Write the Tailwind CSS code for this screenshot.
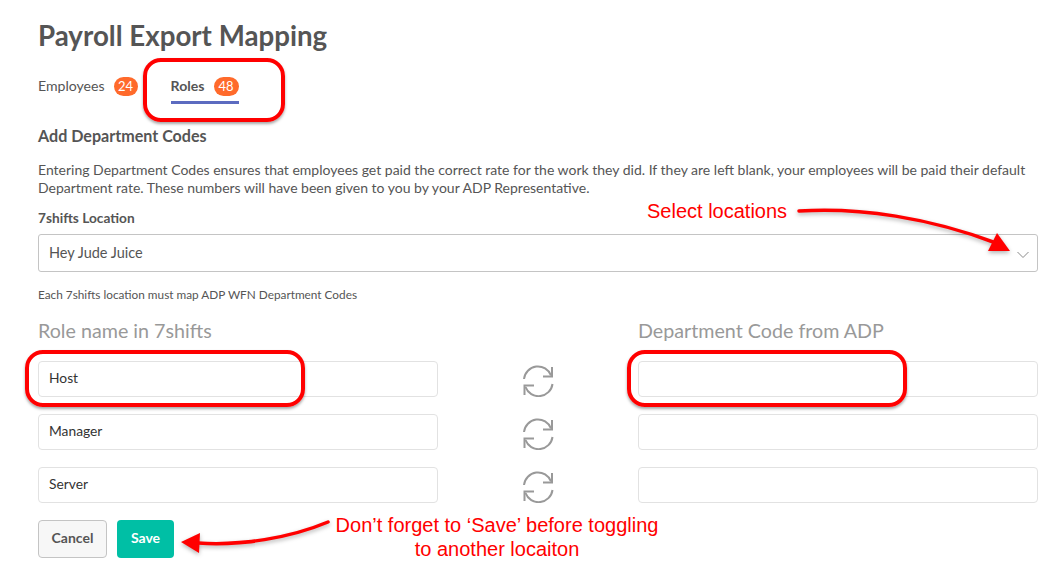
<!DOCTYPE html>
<html lang="en">
  <head>
    <meta charset="UTF-8" />
    <meta name="viewport" content="width=device-width, initial-scale=1.0" />
    <title>Payroll Export Mapping</title>
    <script src="https://cdn.jsdelivr.net/npm/@tailwindcss/browser@4"></script>
  </head>
  <body class="bg-white overflow-hidden font-['Lato',sans-serif]">
    <div class="relative w-[1056px] h-[568px] overflow-hidden">
      <div class="pl-[38px] pr-[18px] pt-[19px]">
        <h1 class="text-[27.7px] leading-[34px] font-bold text-[#555555]">Payroll Export Mapping</h1>

        <!-- tabs -->
        <div class="flex mt-[21px] h-[34px] text-[14.100px] text-[#555555]">
          <div class="flex items-start gap-[9px]">
            <span class="leading-[24px]">Employees</span>
            <span class="w-[24px] h-[19px] mt-[3px] text-center rounded-full bg-[#ff6a2b] text-white text-[13px] leading-[19px]">24</span>
          </div>
          <div class="ml-[33px] flex items-start gap-[9px] h-[30px] w-[68px] border-b-[3px] border-[#5c6bc0]">
            <span class="leading-[24px] font-bold">Roles</span>
            <span class="w-[25px] h-[19px] mt-[3px] text-center rounded-full bg-[#ff6a2b] text-white text-[13px] leading-[19px]">48</span>
          </div>
        </div>

        <h2 class="mt-[17px] text-[16.100px] leading-[22px] font-bold text-[#555555]">Add Department Codes</h2>
        <p class="mt-[14px] text-[14px] leading-[18px] text-[#555555]">
          Entering Department Codes ensures that employees get paid the correct rate for the work they did. If they are left blank, your employees will be paid their default<br />
          Department rate. These numbers will have been given to you by your ADP Representative.
        </p>

        <label class="block mt-[12px] text-[13.700px] leading-[18px] font-bold text-[#555555]">7shifts Location</label>
        <div class="mt-[7px] h-[38px] px-[10px] flex items-center justify-between border border-[#c4c4c4] rounded-[3px] text-[14.500px] text-[#555555]">
          <span class="pb-[1px]">Hey Jude Juice</span>
          <svg class="mr-[-3px] mt-[3px]" width="14" height="8" viewBox="0 0 14 8" fill="none" stroke="#8a8a8a" stroke-width="1"><path d="M1.5 1 7 6.5 12.5 1" /></svg>
        </div>
        <p class="mt-[16px] text-[11.800px] leading-[14px] text-[#555555]">Each 7shifts location must map ADP WFN Department Codes</p>

        <!-- mapping rows -->
        <div class="mt-[17px] grid grid-cols-[400px_200px_400px]">
          <div class="text-[19.700px] leading-[24px] text-[#999999]">Role name in 7shifts</div>
          <div></div>
          <div class="text-[19.700px] leading-[24px] text-[#999999]">Department Code from ADP</div>
        </div>
        <div class="mt-[18px] grid grid-cols-[400px_200px_400px] gap-y-[17px] text-[13.800px] text-[#333333]">
          <div class="h-[36px] px-[10px] pb-[2px] flex items-center border border-[#e2e2e2] rounded-[4px]">Host</div>
          <div class="flex justify-center items-end">
            <svg width="32" height="32" viewBox="0 0 32 32" fill="none" stroke="#999999" stroke-width="2"><path d="M2 14A14 14 0 0 1 29 10.500" /><path d="M30 2V11.500H21" /><path d="M30.500 19A14 14 0 0 1 3.500 22" /><path d="M2.500 30V20.500H12" /></svg>
          </div>
          <div class="h-[36px] border border-[#e2e2e2] rounded-[4px]"></div>

          <div class="h-[36px] px-[10px] pb-[2px] flex items-center border border-[#e2e2e2] rounded-[4px]">Manager</div>
          <div class="flex justify-center items-end">
            <svg width="32" height="32" viewBox="0 0 32 32" fill="none" stroke="#999999" stroke-width="2"><path d="M2 14A14 14 0 0 1 29 10.500" /><path d="M30 2V11.500H21" /><path d="M30.500 19A14 14 0 0 1 3.500 22" /><path d="M2.500 30V20.500H12" /></svg>
          </div>
          <div class="h-[36px] border border-[#e2e2e2] rounded-[4px]"></div>

          <div class="h-[36px] px-[10px] pb-[2px] flex items-center border border-[#e2e2e2] rounded-[4px]">Server</div>
          <div class="flex justify-center items-end">
            <svg width="32" height="32" viewBox="0 0 32 32" fill="none" stroke="#999999" stroke-width="2"><path d="M2 14A14 14 0 0 1 29 10.500" /><path d="M30 2V11.500H21" /><path d="M30.500 19A14 14 0 0 1 3.500 22" /><path d="M2.500 30V20.500H12" /></svg>
          </div>
          <div class="h-[36px] border border-[#e2e2e2] rounded-[4px]"></div>
        </div>

        <div class="mt-[17px] flex gap-[10px] text-[14px] font-bold">
          <button class="w-[69px] h-[38px] pb-[3px] bg-[#f7f7f7] border border-[#c4c4c4] rounded-[4px] text-[#555555]">Cancel</button>
          <button class="w-[57px] h-[38px] pb-[3px] bg-[#00bfa5] rounded-[4px] text-white">Save</button>
        </div>
      </div>

      <!-- red annotations drawn over the screenshot -->
      <div class="absolute left-[143px] top-[58px] w-[142px] h-[64px] border-4 border-[#ff0000] rounded-[18px] shadow-[0_2px_3px_rgba(0,0,0,0.35)]"></div>
      <div class="absolute left-[25px] top-[350px] w-[280px] h-[57px] border-4 border-[#ff0000] rounded-[18px] shadow-[0_2px_3px_rgba(0,0,0,0.35)]"></div>
      <div class="absolute left-[627px] top-[350px] w-[280px] h-[57px] border-4 border-[#ff0000] rounded-[18px] shadow-[0_2px_3px_rgba(0,0,0,0.35)]"></div>

      <svg class="absolute left-0 top-0 drop-shadow-[0_2px_2px_rgba(0,0,0,0.3)]" width="1056" height="568" viewBox="0 0 1056 568" fill="none">
        <path d="M799 211C860 207 930 218 996 243" stroke="#ff0000" stroke-width="3.500" stroke-linecap="round" />
        <path d="M997 233 1010 251 988 251Z" fill="#ff0000" />
        <path d="M328 522C290 538 240 546 198 543" stroke="#ff0000" stroke-width="3.500" stroke-linecap="round" />
        <path d="M181 542 200 533 199 553Z" fill="#ff0000" />
      </svg>

      <div class="absolute left-[647px] top-[200px] text-[20px] leading-[22px] text-[#ff0000] font-['Liberation_Sans',sans-serif]">Select locations</div>
      <div class="absolute left-[326px] top-[513px] w-[342px] text-center text-[20px] leading-[24px] text-[#ff0000] font-['Liberation_Sans',sans-serif]">Don’t forget to ‘Save’ before toggling<br />to another locaiton</div>
    </div>
  </body>
</html>
